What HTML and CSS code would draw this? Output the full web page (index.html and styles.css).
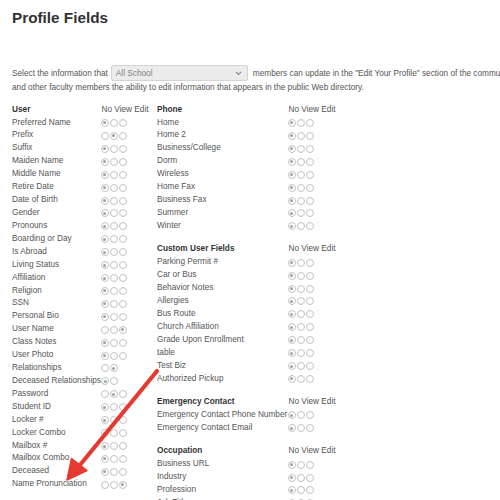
FILE: index.html
```html
<!DOCTYPE html>
<html>
<head>
<meta charset="utf-8">
<title>Profile Fields</title>
<link rel="stylesheet" href="styles.css">
</head>
<body>
<div class="page">
  <h1 class="title">Profile Fields</h1>
  <div class="intro">
    <div class="line1">
      <span>Select the information that</span>
      <span class="select"><span class="sel-text">All School</span><svg class="chev" width="7" height="5" viewBox="0 0 7 5"><path d="M1 1 L3.5 3.5 L6 1" fill="none" stroke="#888" stroke-width="1.1"/></svg></span>
      <span>members can update in the "Edit Your Profile" section of the community portal. Also give teachers</span>
    </div>
    <div class="line2">and other faculty members the ability to edit information that appears in the public Web directory.</div>
  </div>

  <div class="cols">
    <div class="col col1">
      <div class="section">
        <div class="row hdr"><span class="lbl">User</span><span class="nve">No View Edit</span></div>
        <div class="row"><span class="lbl">Preferred Name</span><span class="radios"><i class="r on"></i><i class="r"></i><i class="r"></i></span></div>
        <div class="row"><span class="lbl">Prefix</span><span class="radios"><i class="r"></i><i class="r on"></i><i class="r"></i></span></div>
        <div class="row"><span class="lbl">Suffix</span><span class="radios"><i class="r on"></i><i class="r"></i><i class="r"></i></span></div>
        <div class="row"><span class="lbl">Maiden Name</span><span class="radios"><i class="r on"></i><i class="r"></i><i class="r"></i></span></div>
        <div class="row"><span class="lbl">Middle Name</span><span class="radios"><i class="r on"></i><i class="r"></i><i class="r"></i></span></div>
        <div class="row"><span class="lbl">Retire Date</span><span class="radios"><i class="r on"></i><i class="r"></i><i class="r"></i></span></div>
        <div class="row"><span class="lbl">Date of Birth</span><span class="radios"><i class="r on"></i><i class="r"></i><i class="r"></i></span></div>
        <div class="row"><span class="lbl">Gender</span><span class="radios"><i class="r on"></i><i class="r"></i><i class="r"></i></span></div>
        <div class="row"><span class="lbl">Pronouns</span><span class="radios"><i class="r on"></i><i class="r"></i><i class="r"></i></span></div>
        <div class="row"><span class="lbl">Boarding or Day</span><span class="radios"><i class="r on"></i><i class="r"></i><i class="r"></i></span></div>
        <div class="row"><span class="lbl">Is Abroad</span><span class="radios"><i class="r on"></i><i class="r"></i><i class="r"></i></span></div>
        <div class="row"><span class="lbl">Living Status</span><span class="radios"><i class="r on"></i><i class="r"></i><i class="r"></i></span></div>
        <div class="row"><span class="lbl">Affiliation</span><span class="radios"><i class="r on"></i><i class="r"></i><i class="r"></i></span></div>
        <div class="row"><span class="lbl">Religion</span><span class="radios"><i class="r on"></i><i class="r"></i><i class="r"></i></span></div>
        <div class="row"><span class="lbl">SSN</span><span class="radios"><i class="r on"></i><i class="r"></i><i class="r"></i></span></div>
        <div class="row"><span class="lbl">Personal Bio</span><span class="radios"><i class="r on"></i><i class="r"></i><i class="r"></i></span></div>
        <div class="row"><span class="lbl">User Name</span><span class="radios"><i class="r"></i><i class="r"></i><i class="r on"></i></span></div>
        <div class="row"><span class="lbl">Class Notes</span><span class="radios"><i class="r on"></i><i class="r"></i><i class="r"></i></span></div>
        <div class="row"><span class="lbl">User Photo</span><span class="radios"><i class="r on"></i><i class="r"></i><i class="r"></i></span></div>
        <div class="row"><span class="lbl">Relationships</span><span class="radios"><i class="r"></i><i class="r on"></i></span></div>
        <div class="row"><span class="lbl">Deceased Relationships</span><span class="radios"><i class="r on"></i><i class="r"></i></span></div>
        <div class="row"><span class="lbl">Password</span><span class="radios"><i class="r"></i><i class="r on"></i><i class="r"></i></span></div>
        <div class="row"><span class="lbl">Student ID</span><span class="radios"><i class="r on"></i><i class="r"></i><i class="r"></i></span></div>
        <div class="row"><span class="lbl">Locker #</span><span class="radios"><i class="r on"></i><i class="r"></i><i class="r"></i></span></div>
        <div class="row"><span class="lbl">Locker Combo</span><span class="radios"><i class="r on"></i><i class="r"></i><i class="r"></i></span></div>
        <div class="row"><span class="lbl">Mailbox #</span><span class="radios"><i class="r on"></i><i class="r"></i><i class="r"></i></span></div>
        <div class="row"><span class="lbl">Mailbox Combo</span><span class="radios"><i class="r on"></i><i class="r"></i><i class="r"></i></span></div>
        <div class="row"><span class="lbl">Deceased</span><span class="radios"><i class="r on"></i><i class="r"></i><i class="r"></i></span></div>
        <div class="row"><span class="lbl">Name Pronunciation</span><span class="radios"><i class="r"></i><i class="r"></i><i class="r on"></i></span></div>
      </div>
    </div>

    <div class="col col2">
      <div class="section">
        <div class="row hdr"><span class="lbl">Phone</span><span class="nve">No View Edit</span></div>
        <div class="row"><span class="lbl">Home</span><span class="radios"><i class="r on"></i><i class="r"></i><i class="r"></i></span></div>
        <div class="row"><span class="lbl">Home 2</span><span class="radios"><i class="r on"></i><i class="r"></i><i class="r"></i></span></div>
        <div class="row"><span class="lbl">Business/College</span><span class="radios"><i class="r on"></i><i class="r"></i><i class="r"></i></span></div>
        <div class="row"><span class="lbl">Dorm</span><span class="radios"><i class="r on"></i><i class="r"></i><i class="r"></i></span></div>
        <div class="row"><span class="lbl">Wireless</span><span class="radios"><i class="r on"></i><i class="r"></i><i class="r"></i></span></div>
        <div class="row"><span class="lbl">Home Fax</span><span class="radios"><i class="r on"></i><i class="r"></i><i class="r"></i></span></div>
        <div class="row"><span class="lbl">Business Fax</span><span class="radios"><i class="r on"></i><i class="r"></i><i class="r"></i></span></div>
        <div class="row"><span class="lbl">Summer</span><span class="radios"><i class="r on"></i><i class="r"></i><i class="r"></i></span></div>
        <div class="row"><span class="lbl">Winter</span><span class="radios"><i class="r on"></i><i class="r"></i><i class="r"></i></span></div>
      </div>
      <div class="section">
        <div class="row hdr"><span class="lbl">Custom User Fields</span><span class="nve">No View Edit</span></div>
        <div class="row"><span class="lbl">Parking Permit #</span><span class="radios"><i class="r on"></i><i class="r"></i><i class="r"></i></span></div>
        <div class="row"><span class="lbl">Car or Bus</span><span class="radios"><i class="r on"></i><i class="r"></i><i class="r"></i></span></div>
        <div class="row"><span class="lbl">Behavior Notes</span><span class="radios"><i class="r on"></i><i class="r"></i><i class="r"></i></span></div>
        <div class="row"><span class="lbl">Allergies</span><span class="radios"><i class="r on"></i><i class="r"></i><i class="r"></i></span></div>
        <div class="row"><span class="lbl">Bus Route</span><span class="radios"><i class="r on"></i><i class="r"></i><i class="r"></i></span></div>
        <div class="row"><span class="lbl">Church Affiliation</span><span class="radios"><i class="r on"></i><i class="r"></i><i class="r"></i></span></div>
        <div class="row"><span class="lbl">Grade Upon Enrollment</span><span class="radios"><i class="r on"></i><i class="r"></i><i class="r"></i></span></div>
        <div class="row"><span class="lbl">table</span><span class="radios"><i class="r on"></i><i class="r"></i><i class="r"></i></span></div>
        <div class="row"><span class="lbl">Test Biz</span><span class="radios"><i class="r on"></i><i class="r"></i><i class="r"></i></span></div>
        <div class="row"><span class="lbl">Authorized Pickup</span><span class="radios"><i class="r on"></i><i class="r"></i><i class="r"></i></span></div>
      </div>
      <div class="section">
        <div class="row hdr"><span class="lbl">Emergency Contact</span><span class="nve">No View Edit</span></div>
        <div class="row"><span class="lbl">Emergency Contact Phone Number</span><span class="radios"><i class="r on"></i><i class="r"></i><i class="r"></i></span></div>
        <div class="row"><span class="lbl">Emergency Contact Email</span><span class="radios"><i class="r on"></i><i class="r"></i><i class="r"></i></span></div>
      </div>
      <div class="section">
        <div class="row hdr"><span class="lbl">Occupation</span><span class="nve">No View Edit</span></div>
        <div class="row"><span class="lbl">Business URL</span><span class="radios"><i class="r on"></i><i class="r"></i><i class="r"></i></span></div>
        <div class="row"><span class="lbl">Industry</span><span class="radios"><i class="r on"></i><i class="r"></i><i class="r"></i></span></div>
        <div class="row"><span class="lbl">Profession</span><span class="radios"><i class="r on"></i><i class="r"></i><i class="r"></i></span></div>
        <div class="row"><span class="lbl">Job Title</span><span class="radios"><i class="r on"></i><i class="r"></i><i class="r"></i></span></div>
      </div>
    </div>
  </div>

  <svg class="arrow" width="500" height="500" viewBox="0 0 500 500">
    <line x1="157" y1="371" x2="80" y2="465" stroke="#e53a30" stroke-width="4.2" stroke-linecap="round"/>
    <polygon points="67,480 87,470.5 71.5,458.5" fill="#e53a30" stroke="#e53a30" stroke-width="1.5" stroke-linejoin="round"/>
  </svg>
</div>
</body>
</html>
```

FILE: styles.css
```css
html, body {
  margin: 0;
  padding: 0;
  background: #fff;
  overflow: hidden;
}

body {
  font-family: "Liberation Sans", Arial, sans-serif;
  color: #555;
}

.page {
  position: relative;
  width: 720px;
  height: 500px;
  padding-left: 12px;
  box-sizing: border-box;
  overflow: hidden;
}

.title {
  margin: 9px 0 0;
  font-size: 15.3px;
  line-height: 18px;
  font-weight: bold;
  color: #333;
}

.intro {
  margin-top: 38px;
  font-size: 8.25px;
}

.line1 {
  display: flex;
  align-items: center;
  height: 16px;
  white-space: nowrap;
}

.select {
  display: flex;
  align-items: center;
  justify-content: space-between;
  width: 137px;
  height: 16px;
  box-sizing: border-box;
  margin: 0 5px 0 3px;
  padding: 0 5px 0 4px;
  border: 1px solid #d4d4d4;
  border-radius: 2px;
  background: #ececec;
  color: #808080;
}

.chev {
  display: block;
}

.line2 {
  line-height: 13px;
  white-space: nowrap;
}

.cols {
  display: flex;
  margin-top: 9.6px;
  font-size: 8.25px;
}

.col1 {
  width: 145px;
  flex-shrink: 0;
}

.section + .section {
  margin-top: 10.5px;
}

.row {
  display: flex;
  align-items: center;
  height: 12.93px;
  line-height: 12.93px;
  white-space: nowrap;
}

.lbl {
  flex-shrink: 0;
}

.col1 .lbl {
  min-width: 88px;
}

.col2 .lbl {
  min-width: 130px;
}

.hdr .lbl {
  font-weight: bold;
  color: #333;
}

.nve {
  padding-left: 1.5px;
  color: #555;
}

.radios {
  display: flex;
  gap: 1px;
  padding-left: 0.5px;
}

.r {
  position: relative;
  display: block;
  width: 8px;
  height: 8px;
  box-sizing: border-box;
  border: 1px solid #c2c2c2;
  border-radius: 50%;
  background: #fff;
}

.r.on::after {
  content: "";
  position: absolute;
  left: 1.5px;
  top: 1.5px;
  width: 3px;
  height: 3px;
  border-radius: 50%;
  background: #a0a0a0;
}

.arrow {
  position: absolute;
  left: 0;
  top: 0;
  pointer-events: none;
}
```
